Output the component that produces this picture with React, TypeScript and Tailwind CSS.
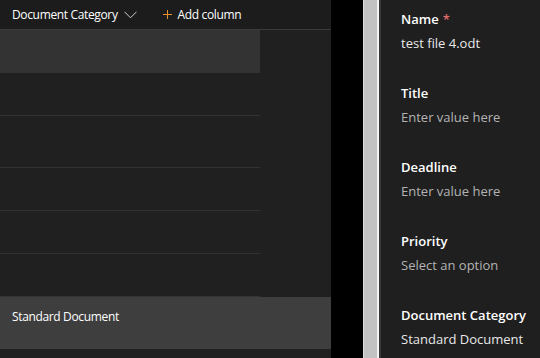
import React from "react";

const font = { fontFamily: '"Open Sans", "Noto Sans", sans-serif' };

function Field({ label, value, required, placeholder }: { label: string; value: string; required?: boolean; placeholder?: boolean }) {
  return (
    <div className="mb-[26px]">
      <div className="h-[20px] flex items-center text-[13px] font-semibold text-white leading-none">
        {label}
        {required && <span className="text-[#e06c6c] ml-[4px]">*</span>}
      </div>
      <div className={`h-[28px] flex items-center text-[13px] leading-none ${placeholder ? "text-[#b3b3b3]" : "text-[#e8e8e8]"}`}>
        {value}
      </div>
    </div>
  );
}

export default function App() {
  return (
    <div className="flex w-[540px] h-[358px] overflow-hidden bg-[#202020]" style={font}>
      <div className="w-[331px] h-full bg-[#202020] flex flex-col shrink-0">
        <div className="h-[30px] bg-[#1c1c1c] border-b border-[#3a3a3a] flex items-center pl-[12px] text-[12px] tracking-[-0.35px] text-white shrink-0">
          <span>Document Category</span>
          <svg width="13" height="8" viewBox="0 0 13 8" className="ml-[6px]" fill="none">
            <path d="M0.5 0.8 L6.5 6.8 L12.5 0.8" stroke="#d0d0d0" strokeWidth="1" />
          </svg>
          <svg width="9" height="9" viewBox="0 0 9 9" className="ml-[26px]" fill="none">
            <path d="M4.5 0 V9 M0 4.5 H9" stroke="#e8902f" strokeWidth="1" />
          </svg>
          <span className="ml-[6px]">Add column</span>
        </div>
        <div className="w-[260px] h-[43px] bg-[#333333] shrink-0" />
        <div className="w-[260px] h-[43px] border-b border-[#333333] shrink-0" />
        <div className="w-[260px] h-[52px] border-b border-[#333333] shrink-0" />
        <div className="w-[260px] h-[43px] border-b border-[#333333] shrink-0" />
        <div className="w-[260px] h-[43px] border-b border-[#333333] shrink-0" />
        <div className="w-[260px] h-[43px] border-b border-[#333333] shrink-0" />
        <div className="w-[331px] h-[52px] bg-[#3e3e3e] pl-[12px] pt-[11px] text-[12px] leading-[18px] tracking-[-0.35px] text-white shrink-0">
          Standard Document
        </div>
      </div>
      <div className="w-[32px] h-full bg-black shrink-0" />
      <div className="w-[1px] h-full bg-[#dcdcdc] shrink-0" />
      <div className="w-[13px] h-full bg-[#c2c2c2] shrink-0" />
      <div className="w-[2px] h-full bg-[#f2f2f2] shrink-0" />
      <div className="w-[2px] h-full bg-[#3a3a3a] shrink-0" />
      <div className="flex-1 h-full bg-[#1f1f1f] pl-[20px] pt-[9px]">
        <Field label="Name" value="test file 4.odt" required />
        <Field label="Title" value="Enter value here" placeholder />
        <Field label="Deadline" value="Enter value here" placeholder />
        <Field label="Priority" value="Select an option" placeholder />
        <Field label="Document Category" value="Standard Document" />
      </div>
    </div>
  );
}
